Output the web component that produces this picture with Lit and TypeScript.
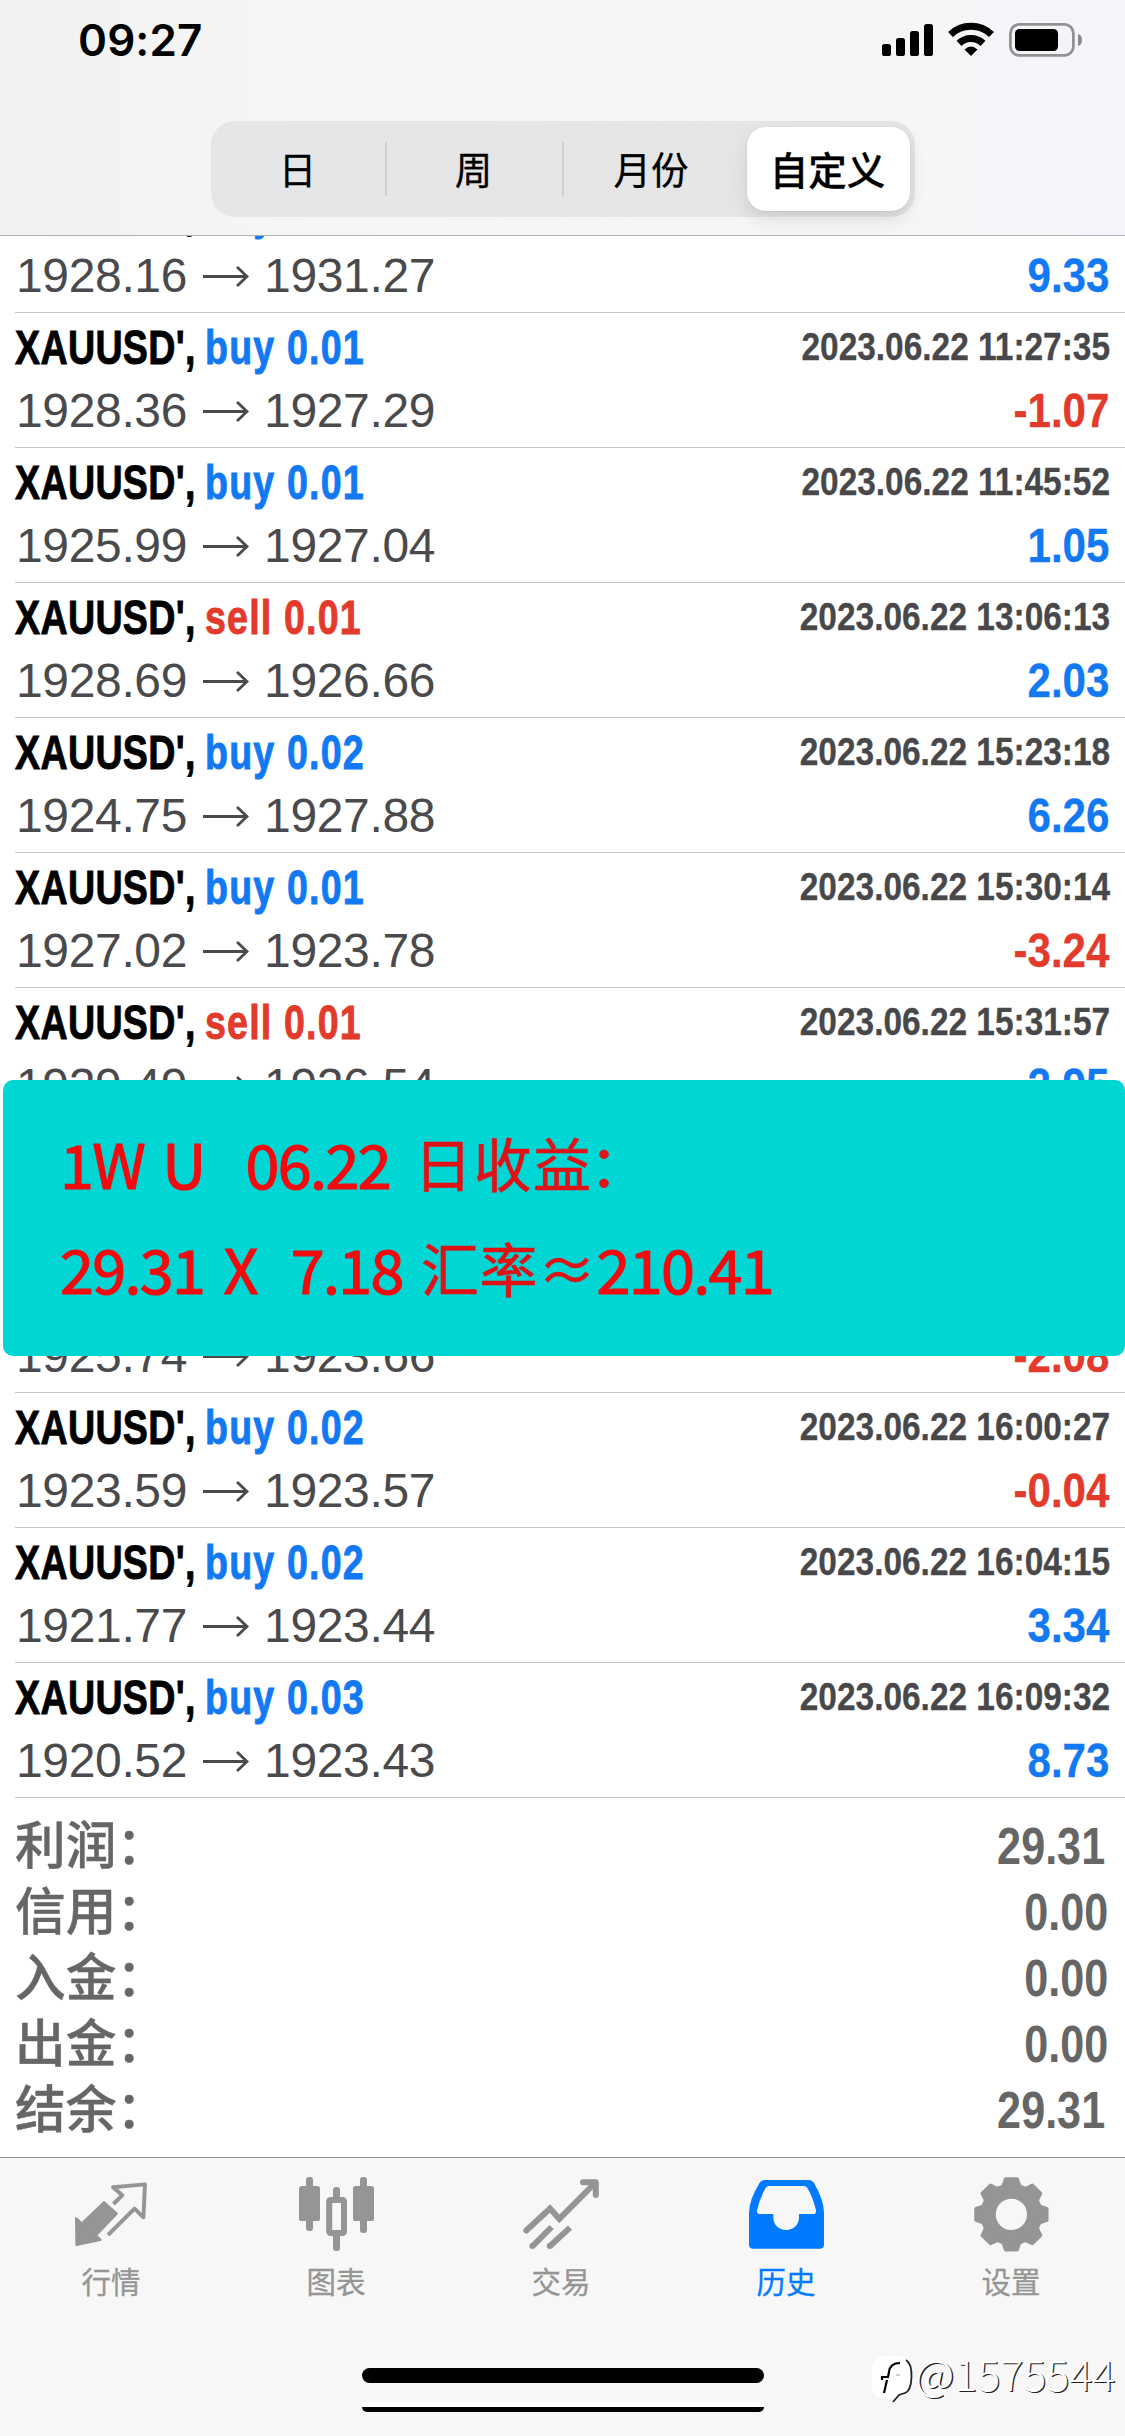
import { LitElement, html, css, svg, nothing } from "lit";
import { customElement, property } from "lit/decorators.js";
import { classMap } from "lit/directives/class-map.js";

interface Deal {
  side?: "buy" | "sell";
  volume?: string;
  time?: string;
  open?: string;
  close?: string;
  profit?: string;
}

const DEALS: Deal[] = [
  { side: "buy", volume: "0.03", open: "1928.16", close: "1931.27", profit: "9.33" },
  { side: "buy", volume: "0.01", time: "2023.06.22 11:27:35", open: "1928.36", close: "1927.29", profit: "-1.07" },
  { side: "buy", volume: "0.01", time: "2023.06.22 11:45:52", open: "1925.99", close: "1927.04", profit: "1.05" },
  { side: "sell", volume: "0.01", time: "2023.06.22 13:06:13", open: "1928.69", close: "1926.66", profit: "2.03" },
  { side: "buy", volume: "0.02", time: "2023.06.22 15:23:18", open: "1924.75", close: "1927.88", profit: "6.26" },
  { side: "buy", volume: "0.01", time: "2023.06.22 15:30:14", open: "1927.02", close: "1923.78", profit: "-3.24" },
  { side: "sell", volume: "0.01", time: "2023.06.22 15:31:57", open: "1929.49", close: "1926.54", profit: "2.95" },
  {},
  { open: "1925.74", close: "1923.66", profit: "-2.08" },
  { side: "buy", volume: "0.02", time: "2023.06.22 16:00:27", open: "1923.59", close: "1923.57", profit: "-0.04" },
  { side: "buy", volume: "0.02", time: "2023.06.22 16:04:15", open: "1921.77", close: "1923.44", profit: "3.34" },
  { side: "buy", volume: "0.03", time: "2023.06.22 16:09:32", open: "1920.52", close: "1923.43", profit: "8.73" },
];

const TOTALS: [string, string][] = [
  ["利润：", "29.31"],
  ["信用：", "0.00"],
  ["入金：", "0.00"],
  ["出金：", "0.00"],
  ["结余：", "29.31"],
];

/** Eight-tooth cog outline, centred on (cx, cy). */
function cogPoints(cx: number, cy: number): string {
  const pts: string[] = [];
  const put = (deg: number, r: number) => {
    const a = (deg * Math.PI) / 180;
    pts.push(`${(cx + r * Math.sin(a)).toFixed(2)},${(cy - r * Math.cos(a)).toFixed(2)}`);
  };
  for (let i = 0; i < 8; i++) {
    const c = i * 45;
    put(c - 19, 29);
    put(c - 15.5, 29.5);
    put(c - 9, 35.6);
    put(c + 9, 35.6);
    put(c + 15.5, 29.5);
    put(c + 19, 29);
  }
  return pts.join(" ");
}

const TABS = [
  {
    label: "行情",
    icon: svg`
      <path fill="currentColor" stroke="currentColor" stroke-width="2.4" stroke-linejoin="round"
        d="M4.2 44.5 L9.8 49.6 L32 28.3 L44.6 39.7 L23.8 61.5 L28.4 65.8 L4.6 70.8 Z"/>
      <path fill="none" stroke="currentColor" stroke-width="3.9" stroke-linejoin="round"
        d="M41.4 30 L50.3 21.3 L41 13.2 L73 10.4 L71.4 43.4 L62.5 34.6 L36 61"/>`,
  },
  {
    label: "图表",
    icon: svg`
      <g fill="currentColor">
        <rect x="2" y="12" width="21" height="35" rx="2.6"/><rect x="9" y="3" width="7" height="54" rx="3"/>
        <rect x="56" y="12" width="21" height="35" rx="2.6"/><rect x="63" y="3" width="7" height="56" rx="3"/>
        <rect x="36" y="13" width="7" height="14" rx="3"/><rect x="36" y="58" width="7" height="19" rx="3"/>
      </g>
      <rect x="32.2" y="26" width="14.8" height="33" rx="1.4" fill="none" stroke="currentColor" stroke-width="6"/>`,
  },
  {
    label: "交易",
    icon: svg`
      <g fill="none" stroke="currentColor" stroke-width="6" stroke-linecap="round" stroke-linejoin="round">
        <path stroke-linejoin="miter" d="M4.3 56.5 L28 34.6 L37.3 44.8 L73 9"/>
        <path d="M61 8.2 H73.8 V21"/>
        <path stroke-linecap="butt" d="M10.3 72.3 L29.6 53"/>
        <path stroke-linecap="butt" d="M27.7 72.3 L48 53.6"/>
      </g>
      <circle cx="10.3" cy="72" r="3" fill="currentColor"/><circle cx="27.7" cy="72" r="3" fill="currentColor"/>`,
  },
  {
    label: "历史",
    active: true,
    icon: svg`
      <path fill="currentColor" fill-rule="evenodd"
        d="M18 6 H61.5 Q65 6 67 9 Q77 26 77 39 V70.5 Q77 74.7 72.8 74.7 H6.2 Q2 74.7 2 70.5 V39 Q2 26 12.5 9 Q14.5 6 18 6 Z
           M22.5 12 Q19.5 12 18 15 Q12.5 25 10 36.5 Q9.6 40 13 40 H26.3 V43 C26.3 51 32 56 39.2 56 C46.4 56 52 51 52 43 V40 H66 Q69.4 40 69 36.5 Q66.5 25 61 15 Q59.5 12 56.5 12 Z"/>`,
  },
  {
    label: "设置",
    icon: svg`
      <polygon fill="currentColor" stroke="currentColor" stroke-width="4" stroke-linejoin="round" points=${cogPoints(39.4, 40.4)}/>
      <circle cx="39.4" cy="40.4" r="15.6" fill="#f7f7f7"/>`,
  },
];

@customElement("deal-row")
class DealRow extends LitElement {
  @property({ attribute: false }) deal: Deal = {};

  static styles = css`
    :host { display: block; box-sizing: border-box; height: 135px; border-bottom: 1px solid #c5c5c8; margin-left: 15px; padding-right: 15px; }
    .line { display: flex; justify-content: space-between; white-space: pre; }
    .head { height: 68px; font-weight: 700; }
    .title { font-size: 49px; line-height: 68px; color: #000; letter-spacing: 0.4px; transform: scaleX(0.768); transform-origin: 0 0; -webkit-text-stroke: 0.9px; }
    .side { letter-spacing: 1.5px; margin-left: -2px; }
    .time { font-size: 39px; line-height: 67px; color: #48484b; transform: scaleX(0.857); transform-origin: 100% 0; -webkit-text-stroke: 0.3px; }
    .body { font-size: 48px; line-height: 59px; }
    .prices { display: flex; color: #4a4a4c; letter-spacing: -0.35px; padding-left: 1px; }
    .prices svg { width: 46px; height: 21px; margin: 20px 15px 0 16px; }
    .profit { font-weight: 700; transform: scaleX(0.877); transform-origin: 100% 0; margin-right: 1px; -webkit-text-stroke: 0.3px; }
    .up { color: #1279f2; }
    .down { color: #e23a2b; }
  `;

  render() {
    const d = this.deal;
    return html`
      <div class="line head">
        ${d.side
          ? html`<span class="title">XAUUSD', <span class=${classMap({ side: true, up: d.side === "buy", down: d.side === "sell" })}>${d.side} ${d.volume}</span></span>`
          : nothing}
        ${d.time ? html`<span class="time">${d.time}</span>` : nothing}
      </div>
      ${d.open
        ? html`<div class="line body">
            <span class="prices">
              <span>${d.open}</span>
              <svg viewBox="0 0 46 21"><path d="M0 10.5 H44 M34 1 L44 10.5 L34 20" fill="none" stroke="#4a4a4c" stroke-width="2.8"/></svg>
              <span>${d.close}</span>
            </span>
            <span class=${classMap({ profit: true, up: !d.profit!.startsWith("-"), down: d.profit!.startsWith("-") })}>${d.profit}</span>
          </div>`
        : nothing}
    `;
  }
}

@customElement("app-root")
class AppRoot extends LitElement {
  static styles = css`
    :host { display: block; position: relative; width: 1125px; height: 2436px; overflow: hidden; background: #fff;
      font-family: "Liberation Sans", "Noto Sans CJK SC", sans-serif; }
    header { box-sizing: border-box; height: 236px; border-bottom: 1px solid #b2b2b4;
      background: linear-gradient(90deg, #f2f1f1 0, #f5f5f5 22%, #f6f6f6 80%, #f3f5fb 100%); }
    .status { display: flex; justify-content: space-between; height: 121px; }
    .clock { font: 600 44px/80px Inter, sans-serif; padding-left: 78px; letter-spacing: 0.1px; }
    .status svg { width: 210px; height: 60px; margin-right: 35px; }
    .segments { display: grid; grid-template-columns: 175px 177px 178px 174px; width: 704px; height: 96px; margin-left: 211px;
      border-radius: 24px; background: linear-gradient(90deg, #e5e6e8, #e6e6e6 30%, #e5e5e6); }
    .segment { display: flex; align-items: center; justify-content: center; position: relative;
      font: 400 37.5px/54px "Noto Sans CJK SC", sans-serif; color: #000; -webkit-text-stroke: 0.3px; }
    .ruled::after { content: ""; position: absolute; right: -1px; top: 21px; width: 2px; height: 54px; background: #cfcfd2; }
    .segment span { position: relative; top: -1px; left: -1px; }
    .chosen { margin: 6px 5px 6px 6px; background: #fff; border-radius: 19px; font-weight: 500; font-size: 38.5px; box-shadow: 0 8px 18px rgba(0, 0, 0, 0.1), 0 1px 3px rgba(0, 0, 0, 0.05); }
    .history { height: 1562px; overflow: hidden; }
    .deals { margin-top: -58px; }
    .totals { box-sizing: border-box; height: 359px; padding: 15px 17px 0 15px; color: #666; }
    .total { display: flex; justify-content: space-between; height: 66px; }
    .total .name { font: 500 50.7px/58px "Noto Sans CJK SC", sans-serif; -webkit-text-stroke: 0.4px; }
    .total .sum { font-size: 52px; line-height: 66px; font-weight: 700; transform: scaleX(0.83); transform-origin: 100% 0; }
    .total .ones { margin-right: 3px; }
    .tabs { box-sizing: border-box; height: 279px; border-top: 1px solid #8f8f92; background: #f7f7f7; }
    .tabrow { display: grid; grid-template-columns: repeat(5, 225px); }
    .tab { display: flex; flex-direction: column; align-items: center; padding-top: 16px; color: #959595; }
    .tab svg { width: 81px; height: 80px; }
    .tab span { font: 400 29.5px/40px "Noto Sans CJK SC", sans-serif; margin-top: 6px; padding-right: 3px; -webkit-text-stroke: 0.3px; }
    .active { color: #007aff; }
    .home { display: flex; flex-direction: column; width: 402px; margin: 68px 0 0 362px; }
    .bar { height: 15px; border-radius: 8px; background: #000; }
    .gap { height: 5px; margin: 19px 0 0; background: #fff; }
    .sliver { height: 5px; border-radius: 0 0 8px 8px; background: #000; }
    .note { position: absolute; left: 3px; top: 1080px; width: 1122px; height: 276px; box-sizing: border-box; padding: 30px 0 0 57px;
      border-radius: 10px; background: #00d7d5; color: #f20a0e; font: 400 61px/105px "Noto Sans CJK SC", sans-serif;
      letter-spacing: -1.6px; -webkit-text-stroke: 1.2px; }
    .formula { display: flex; white-space: pre; }
    .han { font-size: 58px; color: #e01216; letter-spacing: 1.5px; -webkit-text-stroke: 0.6px; }
    .colon { margin-left: -3px; }
    .mark { position: absolute; left: 871px; top: 2355px; display: flex; white-space: pre; }
    .mark svg { width: 45px; height: 50px; }
    .mark span { font: 300 43px/34px "Noto Sans CJK SC", sans-serif; margin-left: -1px; color: #fff; text-shadow: 1.4px 1.2px 0.6px #222; }
    .g1 { margin-left: 0; }
    .g2 { margin-left: 18px; }
    .g3 { margin-left: 41px; }
    .g4 { margin-left: 24px; }
    .g5 { margin-left: 19px; }
    .g6 { margin-left: 34px; }
    .g7 { margin-left: 18px; letter-spacing: 0.5px; }
  `;

  render() {
    return html`
      <header>
        <div class="status">
          <span class="clock">09:27</span>
          <svg viewBox="0 0 210 60">
            <g><rect x="2" y="44" width="9" height="12" rx="2.6"/><rect x="16" y="38" width="9" height="18" rx="2.6"/>
              <rect x="30" y="31" width="9" height="25" rx="2.6"/><rect x="44" y="24" width="9" height="32" rx="2.6"/></g>
            <g fill="none" stroke="#000" stroke-width="7">
              <path d="M70.5 34.6 A29.5 29.5 0 0 1 111.5 34.6"/><path d="M79 43.4 A17.4 17.4 0 0 1 103 43.4"/>
            </g>
            <path d="M84.5 49.5 Q91 43.5 97.5 49.5 L91 56 Z"/>
            <rect x="130.4" y="24.4" width="63" height="31" rx="9" fill="none" stroke="#929295" stroke-width="2.8"/>
            <rect x="135" y="29" width="43" height="22" rx="4.5"/>
            <path d="M198 34 Q202 35 202 40 Q202 45 198 46 Z" fill="#8b8b8e"/>
          </svg>
        </div>
        <div class="segments">
          <div class="segment ruled"><span>日</span></div>
          <div class="segment ruled"><span>周</span></div>
          <div class="segment"><span>月份</span></div>
          <div class="segment chosen"><span>自定义</span></div>
        </div>
      </header>
      <div class="history">
        <div class="deals">${DEALS.map((d) => html`<deal-row .deal=${d}></deal-row>`)}</div>
      </div>
      <div class="totals">
        ${TOTALS.map(([name, sum]) => html`<div class="total"><span class="name">${name}</span><span class=${classMap({ sum: true, ones: sum.endsWith("1") })}>${sum}</span></div>`)}
      </div>
      <div class="tabs">
        <div class="tabrow">
          ${TABS.map((t) => html`<div class=${classMap({ tab: true, active: !!t.active })}><svg viewBox="0 0 81 80">${t.icon}</svg><span>${t.label}</span></div>`)}
        </div>
        <div class="home"><div class="bar"></div><div class="gap"></div><div class="sliver"></div></div>
      </div>
      <div class="note">
        <div class="formula"><span class="g1">1W</span><span class="g2">U</span><span class="g3">06.22</span><span class="g4 han">日收益<span class="colon">：</span></span></div>
        <div class="formula"><span>29.31</span><span class="g5">X</span><span class="g6">7.18</span><span class="han g7">汇率≈</span><span>210.41</span></div>
      </div>
      <div class="mark">
        <svg viewBox="0 0 45 50">
          <rect x="1" y="1" width="39" height="43" rx="13" fill="#fff"/>
          <path d="M35 5 Q41 9 40.5 22 Q40 36 34 38 L28 40 L22 47" fill="none" stroke="#222" stroke-width="1.8"/>
          <path d="M29 8 Q19 8 18 17 L17 22 H11 V25 M16 25 L13 38" fill="none" stroke="#000" stroke-width="2.2"/>
          <path d="M25 20 H29" stroke="#999" stroke-width="1"/>
        </svg>
        <span>@1575544</span>
      </div>
    `;
  }
}
